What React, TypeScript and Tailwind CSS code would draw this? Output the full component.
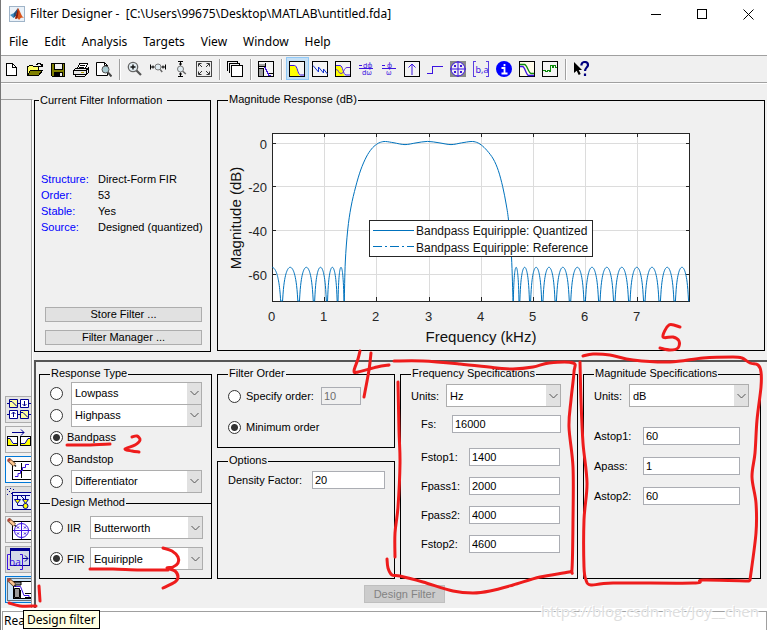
import React from "react";

type Point = [number, number];

const BLUE = "#0072bd";
const RED = "#ee1c1c";

/** Smooth curve through all points (Catmull-Rom converted to cubic Béziers). */
function smooth(points: Point[]): string {
  let d = `M${points[0][0]} ${points[0][1]}`;
  for (let i = 0; i < points.length - 1; i++) {
    const a = points[Math.max(0, i - 1)];
    const b = points[i];
    const c = points[i + 1];
    const e = points[Math.min(points.length - 1, i + 2)];
    d += `C${b[0] + (c[0] - a[0]) / 6} ${b[1] + (c[1] - a[1]) / 6} ${c[0] - (e[0] - b[0]) / 6} ${c[1] - (e[1] - b[1]) / 6} ${c[0]} ${c[1]}`;
  }
  return d;
}

/* ---------- toolbar icons ---------- */

function Icon({ children, soft = false }: { children: React.ReactNode; soft?: boolean }) {
  return (
    <svg
      width="16"
      height="16"
      viewBox="0 0 16 16"
      fill="none"
      stroke="#000"
      shapeRendering={soft ? "auto" : "crispEdges"}
      aria-hidden="true"
      className="block"
    >
      {children}
    </svg>
  );
}

const Frame = () => <rect x="0.5" y="0.5" width="15" height="15" fill="#f4f4f4" />;

const icons: Record<string, React.ReactNode> = {
  New: (
    <Icon>
      <path d="M2.500 2.500h6l4 4v8h-10z" fill="#fff" />
      <path d="M8.500 2.500v4h4" />
    </Icon>
  ),
  Open: (
    <Icon>
      <path d="M0.500 13.500v-8h1l1-1h3l1 1h5v3" fill="#ffff66" />
      <path d="M0.500 14.500l3-5h12l-4 5z" fill="#808000" />
      <path d="M9 3.500h1v-1h3v1h1v2m0 0h-2m2 0h1v-3" />
    </Icon>
  ),
  Save: (
    <Icon>
      <path d="M1.500 2.500h13v13h-12l-1-1z" fill="#808000" />
      <rect x="4.500" y="2.500" width="8" height="6" fill="#f0f0f0" />
      <rect x="4" y="11" width="9" height="4" fill="#000" stroke="none" />
      <rect x="10" y="12" width="2" height="3" fill="#eee" stroke="none" />
    </Icon>
  ),
  Print: (
    <Icon>
      <path d="M4.500 7.500l2-5h8l-2 5z" fill="#fff" />
      <path d="M7 4.500h5M6 6.500h5" />
      <path d="M0.500 9.500l2-2h12l1-1v5l-2 2h-13z" fill="#e8e8e8" />
      <path d="M1 9.500h12v4M13 9.500l2-2M2.500 13.500v2h9l2-2" />
      <path d="M8 11.500h3" stroke="#b5a000" />
    </Icon>
  ),
  "Print preview": (
    <Icon soft>
      <path d="M0.500 1.500h8l3 3v10h-11z" fill="#fff" />
      <path d="M8.500 1.500v3h3" />
      <circle cx="9.500" cy="8.500" r="3.500" fill="#a9cbd2" stroke="#555" />
      <path d="M12 11.500l3.500 4" strokeWidth="2" stroke="#444" />
    </Icon>
  ),
  "Zoom in": (
    <Icon soft>
      <circle cx="6" cy="6" r="4.700" fill="#e3edf2" stroke="#666" strokeWidth="1.300" />
      <path d="M3.500 6h5M6 3.500v5" stroke="#111" strokeWidth="1.400" />
      <path d="M9.500 9.500l4.500 4.500" stroke="#555" strokeWidth="2.200" />
    </Icon>
  ),
  "Zoom X": (
    <Icon soft>
      <circle cx="8" cy="6" r="3" fill="#dfeaf0" stroke="#777" />
      <path d="M10.200 8.500l2 2.500" stroke="#666" strokeWidth="1.500" />
      <path d="M.5 3.500v5M15.500 3.500v5M1 6h3.500M11.500 6H15M3 4.500v3M13 4.500v3" />
    </Icon>
  ),
  "Zoom Y": (
    <Icon soft>
      <circle cx="7.500" cy="8" r="3" fill="#dfeaf0" stroke="#777" />
      <path d="M9.800 10.200l3 2.800" stroke="#666" strokeWidth="1.500" />
      <path d="M5 .5h5M5 15.500h5M7.500 1v3.500M7.500 11.500V15M6 3h3M6 13h3" />
    </Icon>
  ),
  "Full view": (
    <Icon soft>
      <rect x="0.500" y="0.500" width="15" height="15" fill="#eee" stroke="#444" />
      <path
        d="M2.500 5.500v-3h3M3 3l3 3M10.500 2.500h3v3M13 3l-3 3M2.500 10.500v3h3M3 13l3-3M13.500 10.500v3h-3M13 13l-3-3"
        stroke="#333"
      />
    </Icon>
  ),
  "Full analysis": (
    <Icon>
      <path d="M0.500 10V.5h10v2" />
      <path d="M2.500 12V2.500h10v2" />
      <rect x="4.500" y="4.500" width="11" height="11" fill="#fff" />
    </Icon>
  ),
  "Filter specifications": (
    <Icon>
      <Frame />
      <path d="M1 3h6v2H1zM1 8h4v7H1z" fill="#a0a0a0" stroke="none" />
      <path d="M1 5.500h6.500V2M1 7.500h4.500V15M10.500 15v-2.500H15" />
      <path d="M6 6.500h1.500v2h1v2h1v2h1v2h2" stroke="#4214d6" />
    </Icon>
  ),
  "Magnitude response": (
    <Icon soft>
      <Frame />
      <path d="M1 5h5c2 0 3 9 5 10H1z" fill="#ffff00" stroke="none" />
      <path d="M1 4.500h4.500c3 0 3 9 6 9.500H15" stroke="#3c14e0" />
    </Icon>
  ),
  "Phase response": (
    <Icon soft>
      <Frame />
      <path d="M1 4.500l5.500 6.500V6l5 6V8l4 5" stroke="#1030d0" />
    </Icon>
  ),
  "Magnitude and phase responses": (
    <Icon soft>
      <Frame />
      <path d="M1 5h4c2 0 3 9 5 10H1z" fill="#ffff00" stroke="none" />
      <path d="M1 4.500h4c3 0 3 9.500 6 9.500h4" stroke="#3c14e0" />
      <path d="M15 6.500h-3c-3 0-3 6-6 6-3 0-2-4-5-4" stroke="#6630d0" />
    </Icon>
  ),
  "Group delay response": (
    <Icon>
      <text x="5" y="6.500" fontSize="7" fill="#3c14e0" stroke="none" className="font-sans">dϕ</text>
      <text x="4" y="14.300" fontSize="7" fill="#3c14e0" stroke="none" className="font-sans">dω</text>
      <path d="M1 4.500h3M1 7.500h14" stroke="#3c14e0" />
    </Icon>
  ),
  "Phase delay": (
    <Icon>
      <text x="6" y="6.500" fontSize="7" fill="#3c14e0" stroke="none" className="font-sans">ϕ</text>
      <text x="5" y="14.300" fontSize="7" fill="#3c14e0" stroke="none" className="font-sans">ω</text>
      <path d="M1 4.500h3M1 7.500h14" stroke="#3c14e0" />
    </Icon>
  ),
  "Impulse response": (
    <Icon soft>
      <Frame />
      <path d="M8 14V3M4.500 6.500L8 3l3.500 3.500" stroke="#3c14e0" />
    </Icon>
  ),
  "Step response": (
    <Icon>
      <path d="M0 12.500h5.500v-7H16" stroke="#3c14e0" />
    </Icon>
  ),
  "Pole/zero plot": (
    <Icon soft>
      <rect x="0" y="0" width="16" height="16" fill="#888" stroke="none" />
      <circle cx="8" cy="8" r="7" fill="#eee" stroke="#3c14e0" />
      <path d="M8 0v16M0 8h16" stroke="#3c14e0" />
      <path d="M4 4l2 2m0-2L4 6M10 4l2 2m0-2l-2 2M4 10l2 2m0-2l-2 2M10 10l2 2m0-2l-2 2" stroke="#3c14e0" />
    </Icon>
  ),
  "Filter coefficients": (
    <Icon>
      <path d="M3 .5H.5v15H3M13 .5h2.500v15H13" stroke="#5a3ee0" />
      <text x="2.500" y="12" fontSize="9" fill="#3c14e0" stroke="none" className="font-sans">b,a</text>
    </Icon>
  ),
  "Filter information": (
    <Icon soft>
      <circle cx="8" cy="8" r="8" fill="#0000ff" stroke="none" />
      <path d="M8.500 3v2.200M5.500 7h3v5.500M5.500 12.500h6" stroke="#fff" strokeWidth="1.800" />
    </Icon>
  ),
  "Magnitude response estimate": (
    <Icon soft>
      <rect x="0.500" y="0.500" width="15" height="15" fill="#fffbea" />
      <path d="M1 3.500h4.500c2.500 0 4 8.500 6.500 9h3" stroke="#0a8a0a" strokeWidth="1.300" />
      <path d="M1 5.500h2.500c2.500 0 3.500 8.500 6 9H15" stroke="#3c14e0" strokeWidth="1.300" />
    </Icon>
  ),
  "Round-off noise power spectrum": (
    <Icon>
      <Frame />
      <path d="M1 9.500h2v1h2v-1h2v1h1.500v-6h2v2h1v-2h2v2h1" stroke="#0a8a0a" />
    </Icon>
  ),
  "What's this": (
    <Icon soft>
      <path d="M1 1v11l2.700-2.300 2 4.300 2-1-2-4H9z" fill="#000" stroke="none" />
      <path d="M8.500 4.500V3.200C9 1.500 10.500 1 12 1s3 1 3 3-3 3-3 6M12 12.500v2.500" stroke="#00007f" strokeWidth="2.200" />
    </Icon>
  ),
};

const toolbar: string[][] = [
  ["New", "Open", "Save", "Print", "Print preview"],
  ["Zoom in", "Zoom X", "Zoom Y", "Full view"],
  ["Full analysis"],
  ["Filter specifications"],
  [
    "Magnitude response",
    "Phase response",
    "Magnitude and phase responses",
    "Group delay response",
    "Phase delay",
    "Impulse response",
    "Step response",
    "Pole/zero plot",
    "Filter coefficients",
    "Filter information",
    "Magnitude response estimate",
    "Round-off noise power spectrum",
  ],
  ["What's this"],
];

function Toolbar() {
  return (
    <div role="toolbar" className="flex h-7 items-start border-b border-white bg-[#f0f0f0] shadow-[inset_0_-1px_0_#a0a0a0]">
      {toolbar.map((group, g) => (
        <div key={g} className="flex">
          {g > 0 && (
            <span className="flex w-2 pl-[3px] pt-[3px]">
              <span className="h-[21px] w-[2px] border-l border-r border-l-[#a0a0a0] border-r-white" />
            </span>
          )}
          {group.map((name) => (
            <button
              key={name}
              type="button"
              aria-label={name}
              className={
                name === "Magnitude response"
                  ? "mt-px h-[23px] w-[23px] border border-[#90c8f6] bg-[#c4dff5] pl-[2px]"
                  : "mt-px h-[23px] w-[23px] pl-[3px]"
              }
            >
              {icons[name]}
            </button>
          ))}
        </div>
      ))}
    </div>
  );
}

/* ---------- side panel icons ---------- */

const Pencil = () => (
  <g>
    <path d="M1.500 1.500l6 5.500" stroke="#5b3a1c" strokeWidth="4" />
    <path d="M2 2l5.500 5" stroke="#fbc793" strokeWidth="2.400" />
    <path d="M1 1l2 2" stroke="#b5483c" strokeWidth="3" />
    <path d="M7.500 7l1.500 1.500" stroke="#222" strokeWidth="1.500" />
  </g>
);

const NAVY = "#000090";

const sideItems: { name: string; look: string; art: React.ReactNode }[] = [
  {
    name: "Create a multirate filter",
    look: "border-[#adadad] bg-[#e6e6e6]",
    art: (
      <g stroke={NAVY}>
        <path d="M0 5.500h24M0 16.500h24" />
        <path d="M2.500 1.500h8v8h-8zM13.500 12.500h8v8h-8z" fill="#ffffa0" />
        <path d="M13.500 1.500h8v8h-8zM2.500 12.500h8v8h-8z" fill="#fff" />
        <path d="M3 3.500h2l5 5M14 14.500h2l5 5M17.500 3v5M15.500 6l2 2 2-2M6.500 19v-5M4.500 16l2-2 2 2" />
      </g>
    ),
  },
  {
    name: "Transform filter",
    look: "border-[#adadad] bg-[#f0f0f0]",
    art: (
      <g stroke={NAVY}>
        <path d="M5 4.500h12M14 1.500l3 3-3 3" />
        <g stroke="#000">
          <rect x="0.500" y="8.500" width="10" height="9" fill="#fff" />
          <rect x="13.500" y="8.500" width="10" height="9" fill="#fff" />
        </g>
        <path d="M1 11h2l2 5h5v1H1zM14 16h4l3-5h2v6h-9z" fill="#ffff00" stroke="none" />
        <path d="M1 10.500h2l3 5h4M14 15.500h4l3-5h2" />
      </g>
    ),
  },
  {
    name: "Set quantization parameters",
    look: "border-[#0078d7] bg-[#fafafa]",
    art: (
      <g>
        <rect x="5.500" y="3.500" width="20" height="18" fill="#fff" stroke="#000" />
        <path d="M14.500 5v15M7 12.500h17" stroke="#000" />
        <path d="M8 18.500h3v-3h2.500v-3h2v-3h3v-3H22" stroke="#3c14e0" />
        <Pencil />
      </g>
    ),
  },
  {
    name: "Realize model",
    look: "border-[#adadad] bg-[#dedede]",
    art: (
      <g stroke={NAVY}>
        <path d="M0 1.500h1M3 .5h1M2 3.500h1M4 5.500h1M0 6.500h1M6 1.500h1" />
        <rect x="5.500" y="4.500" width="20" height="17" fill="#eaf0ff" />
        <path d="M6 7.500h17M10.500 7v10M18.500 7v9M10.500 17.500h6M14 8l3 3" />
        <path d="M7.500 11.500h6l-3 4zM15.500 11.500h6l-3 4z" fill="#ffff00" />
        <circle cx="18.500" cy="18" r="2.500" fill="#ffff00" />
      </g>
    ),
  },
  {
    name: "Pole/zero editor",
    look: "border-[#adadad] bg-[#f0f0f0]",
    art: (
      <g>
        <rect x="5.500" y="3.500" width="20" height="18" fill="#fff" stroke="#000" />
        <circle cx="14.500" cy="12.500" r="7" stroke="#3c14e0" fill="#fff" />
        <path
          d="M14.500 4v17M6 12.500h18M10 8.500l2 2m0-2l-2 2M17 8.500l2 2m0-2l-2 2M10 14.500l2 2m0-2l-2 2M17 14.500l2 2m0-2l-2 2"
          stroke="#3c14e0"
        />
        <Pencil />
      </g>
    ),
  },
  {
    name: "Import filter",
    look: "border-[#adadad] bg-[#dedede]",
    art: (
      <g>
        <rect x="3.500" y="0.500" width="19" height="17" fill="#d4dae8" stroke={NAVY} />
        <rect x="3" y="0" width="20" height="3" fill={NAVY} />
        <path d="M15 10.500h6M18 7.500l3 3-3 3" stroke={NAVY} />
        <path d="M3 6.500H.5v15H3M13 6.500h2.500v15H13" stroke="#3c14e0" />
        <text x="2" y="18" fontSize="10" fill="#3c14e0" className="font-sans">
          ba
        </text>
      </g>
    ),
  },
  {
    name: "Design filter",
    look: "border-[#0078d7] bg-[#cce4f7]",
    art: (
      <g>
        <rect x="0.500" y="0.500" width="26" height="22" stroke="#000" strokeDasharray="1 1" />
        <rect x="6.500" y="3.500" width="20" height="17" fill="#fff" stroke="#000" />
        <path d="M7 4h7v3H7zM7.500 10.500h5v9h-5z" fill="#999" stroke="#000" />
        <path d="M7 8.500h6.500l3.500 9h5v2" stroke="#3c14e0" />
        <path d="M13.500 12v8M18 15.500h6M18 19.500h6" stroke="#000" />
        <Pencil />
      </g>
    ),
  },
];

function SideBar() {
  return (
    <nav
      aria-label="Panels"
      className="mr-px mt-[15px] flex w-8 shrink-0 flex-col justify-end gap-[3px] border-r border-t border-r-white border-t-[#a0a0a0] pb-[5px] pl-1 shadow-[inset_-1px_0_0_#a0a0a0]"
    >
      {sideItems.map((item) => (
        <button
          key={item.name}
          type="button"
          aria-label={item.name}
          className={`h-[27px] w-[26px] overflow-hidden border border-r-0 pl-px ${item.look}`}
        >
          <svg width="24" height="23" viewBox="0 0 24 23" fill="none" aria-hidden="true" className="block">
            {item.art}
          </svg>
        </button>
      ))}
    </nav>
  );
}

/* ---------- magnitude chart ---------- */

const leftNulls = [281.7, 298.7, 314, 327, 337.7, 344.3];
const rightNulls = [513, 519.3, 530, 542.3, 555.7, 570, 584.7, 599.3, 614.3, 629.3, 644.3, 659.7, 674.7, 689.3];
const band: Point[] = [
  [344.3, 301], [345.3, 262], [347.7, 230], [351, 207], [355.7, 186.7], [360.7, 170], [366.3, 157],
  [371.5, 149], [376.3, 144.5], [380.5, 142.3], [385.5, 141.5], [394, 142.8], [405, 144.6],
  [416, 142.9], [427.5, 141.4], [439, 142.8], [451, 144.6], [461.5, 142.9], [471, 141.5],
  [476.5, 142.3], [481.3, 145], [487, 150.5], [493.3, 159], [498.3, 170.5], [502.7, 186.7],
  [506.3, 205], [508.7, 222], [511.5, 257], [513, 301],
];

function lobe(from: number, to: number, start = 0): string {
  const steps = 40;
  let d = "";
  for (let i = 0; i <= steps; i++) {
    const t = start + ((1 - start) * i) / steps;
    const s = Math.max(Math.sin(Math.PI * t), 0.001);
    const y = Math.min(301, 267.3 - 43.6 * Math.log10(s));
    d += `${i === 0 ? "M" : "L"}${(from + (to - from) * t).toFixed(2)} ${y.toFixed(2)}`;
  }
  return d;
}

const lobes = [
  lobe(262.3, leftNulls[0], 0.5),
  ...leftNulls.slice(1).map((x, i) => lobe(leftNulls[i], x)),
  ...rightNulls.slice(1).map((x, i) => lobe(rightNulls[i], x)),
].join("");

const xTicks = [0, 1, 2, 3, 4, 5, 6, 7].map((n) => ({ n, x: Math.round(272 + n * 52.2) + 0.5 }));
const yTicks = [
  { n: 0, y: 143.5 },
  { n: -20, y: 186.5 },
  { n: -40, y: 230.5 },
  { n: -60, y: 274.5 },
];

function Chart() {
  return (
    <svg viewBox="218 108 546 242" className="block h-[242px] w-full" role="img" aria-label="Magnitude response">
      <rect x="272.500" y="133.500" width="417" height="168" fill="#fff" />
      <g stroke="#dcdcdc">
        {xTicks.slice(1).map((t) => (
          <path key={t.n} d={`M${t.x} 134V301`} />
        ))}
        {yTicks.map((t) => (
          <path key={t.n} d={`M273 ${t.y}H689`} />
        ))}
      </g>
      <g stroke="#262626" fill="none">
        {xTicks.map((t) => (
          <path key={t.n} d={`M${t.x} 133v4M${t.x} 301v-4`} />
        ))}
        {yTicks.map((t) => (
          <path key={t.n} d={`M272 ${t.y}h4M690 ${t.y}h-4`} />
        ))}
        <rect x="272.500" y="133.500" width="417" height="168" />
      </g>
      <path d={lobes + smooth(band)} fill="none" stroke={BLUE} strokeWidth="1" />
      <g fill="#262626" fontSize="13">
        {xTicks.map((t) => (
          <text key={t.n} x={t.x - 1} y="321" textAnchor="middle">
            {t.n}
          </text>
        ))}
        {yTicks.map((t) => (
          <text key={t.n} x="267" y={t.y + 5} textAnchor="end">
            {t.n}
          </text>
        ))}
      </g>
      <g fill="#111" fontSize="15">
        <text x="481" y="342" textAnchor="middle">
          Frequency (kHz)
        </text>
        <text transform="translate(241 218) rotate(-90)" textAnchor="middle">
          Magnitude (dB)
        </text>
      </g>
      <rect x="369.500" y="220.500" width="223" height="36" fill="#fff" stroke="#262626" />
      <path d="M373 230.500h41" stroke={BLUE} />
      <path d="M373 246.500h41" stroke={BLUE} strokeDasharray="9 3 2 3" />
      <g fill="#111" fontSize="12">
        <text x="416" y="235">Bandpass Equiripple: Quantized</text>
        <text x="416" y="252">Bandpass Equiripple: Reference</text>
      </g>
    </svg>
  );
}

/* ---------- form pieces ---------- */

function Group({ title, className = "", children }: { title: string; className?: string; children: React.ReactNode }) {
  return (
    <fieldset className={`min-w-0 border border-black ${className}`}>
      <legend className="ml-[10px] px-px pb-[3px] leading-3">{title}</legend>
      {children}
    </fieldset>
  );
}

function Select({ label, value, className = "" }: { label: string; value: string; className?: string }) {
  return (
    <span className={`relative block h-[23px] min-w-0 ${className}`}>
      <select
        aria-label={label}
        defaultValue={value}
        className="block h-full w-full appearance-none border border-[#adadad] bg-white pl-[3px] pr-5"
      >
        <option>{value}</option>
      </select>
      <span className="pointer-events-none absolute bottom-px right-px top-px flex w-[14px] items-center justify-center bg-[#e1e1e1]">
        <svg width="9" height="6" viewBox="0 0 9 6" fill="none" stroke="#555" aria-hidden="true">
          <path d="M0.500 1l4 4 4-4" />
        </svg>
      </span>
    </span>
  );
}

function Radio({ name, label, checked = false }: { name: string; label: string; checked?: boolean }) {
  return (
    <input
      type="radio"
      name={name}
      aria-label={label}
      defaultChecked={checked}
      className="h-[13px] w-[13px] shrink-0 appearance-none rounded-full border border-[#333] bg-white checked:bg-[radial-gradient(circle,#333_3px,#fff_4px)]"
    />
  );
}

function Field({
  label,
  value,
  labelWidth,
  className = "",
}: {
  label: string;
  value: string;
  labelWidth: string;
  className?: string;
}) {
  return (
    <label className={`flex h-[18px] items-center ${className}`}>
      <span className={`shrink-0 ${labelWidth}`}>{label}</span>
      <input defaultValue={value} className="h-full w-0 min-w-0 flex-1 border border-[#abadb3] bg-white pl-[2px]" />
    </label>
  );
}

function UnitsRow({ value, className }: { value: string; className: string }) {
  return (
    <label className={`flex items-center pl-[10px] ${className}`}>
      <span className="w-[35px] shrink-0">Units:</span>
      <Select label="Units" value={value} className="flex-1" />
    </label>
  );
}

/* ---------- hand-drawn marks ---------- */

const marks: Point[][] = [
  [[398, 382], [399, 430], [400, 463], [398, 507], [395, 533], [395, 557]],
  [[394, 361], [423, 361], [460, 364], [497, 368], [513, 369], [533, 367], [549, 363], [573, 363], [574, 372], [571, 400], [569, 427], [573, 467], [573, 520], [572, 569], [569, 572], [540, 577], [513, 585], [490, 591], [473, 593], [453, 591], [423, 582], [400, 576], [392, 575], [388, 568], [387, 559]],
  [[583, 356], [593, 354], [610, 355], [633, 360], [670, 362], [703, 358], [733, 357], [742, 358], [750, 363], [758, 365], [761, 372], [761, 387], [757, 420], [755, 453], [752, 477], [756, 503], [756, 533], [750, 580]],
  [[580, 362], [581, 400], [583, 443], [587, 483], [584, 520], [584, 567], [586, 580], [591, 585], [613, 583], [693, 583], [703, 580], [749, 581]],
  [[680, 327], [669, 325], [663, 337], [673, 337], [679, 341], [678, 348], [670, 350], [660, 348]],
  [[360, 351], [358, 359], [354, 371], [358, 372], [377, 367], [389, 365]],
  [[371, 353], [369, 370], [364, 397]],
  [[132, 437], [137, 436], [140, 440], [135, 445], [125, 449], [132, 451], [139, 452]],
  [[67, 445], [87, 445], [110, 444]],
  [[163, 548], [172, 551], [178, 557], [178, 563], [173, 567], [167, 568], [175, 571], [178, 577], [175, 582], [163, 588]],
  [[90, 569], [113, 569], [140, 570], [168, 570]],
  [[39, 586], [40, 601]],
  [[9, 603], [20, 606], [36, 606]],
];

function Marks() {
  return (
    <svg
      width="767"
      height="630"
      viewBox="0 0 767 630"
      fill="none"
      stroke={RED}
      strokeWidth="3"
      strokeLinecap="round"
      strokeLinejoin="round"
      aria-hidden="true"
      className="pointer-events-none absolute -left-px top-0"
    >
      {marks.map((m, i) => (
        <path key={i} d={smooth(m)} />
      ))}
    </svg>
  );
}

/* ---------- window ---------- */

const info = [
  ["Structure:", "Direct-Form FIR"],
  ["Order:", "53"],
  ["Stable:", "Yes"],
  ["Source:", "Designed (quantized)"],
];

const uiFont = "font-['Noto_Sans','Open_Sans',sans-serif]";

export default function App() {
  return (
    <div className="relative flex min-h-screen flex-col overflow-hidden border-l border-[#777] bg-white font-['Liberation_Sans',Arial,sans-serif] text-[11px] leading-4 text-black">
      <header className={`flex h-7 items-center pl-2 text-[12px] ${uiFont}`}>
        <svg width="16" height="16" viewBox="0 0 16 16" aria-hidden="true">
          <rect x="0.500" y="0.500" width="15" height="15" fill="#eaf1f8" stroke="#9fb4c8" />
          <path d="M1 9l4-2 2 2-2.500 3z" fill="#3f8fc4" />
          <path d="M5 7l4-5-1.500 7.500-3 2.500z" fill="#22507c" />
          <path d="M9 2c2 2 3 8 6 10-2-1-3-1-5 2-1-2-2-2-4-1 1-3 2-7 3-11z" fill="#d9541a" />
          <path d="M9 2c1 4 0 8-1 11 0 0-1-1-2 0 1-3 2-7 3-11z" fill="#8a1d0c" />
        </svg>
        <h1 className="ml-[5px] flex-1 whitespace-pre">{"Filter Designer -  [C:\\Users\\99675\\Desktop\\MATLAB\\untitled.fda]"}</h1>
        <div className="-mr-1 flex">
          <button type="button" aria-label="Minimize" className="flex h-7 w-[46px] items-center justify-center">
            <svg width="11" height="11" stroke="#000" aria-hidden="true"><path d="M0 5.500h10" /></svg>
          </button>
          <button type="button" aria-label="Maximize" className="flex h-7 w-[46px] items-center justify-center">
            <svg width="11" height="11" stroke="#000" fill="none" aria-hidden="true"><rect x="0.500" y="0.500" width="9" height="9" /></svg>
          </button>
          <button type="button" aria-label="Close" className="flex h-7 w-[46px] items-center justify-center">
            <svg width="11" height="11" stroke="#000" aria-hidden="true"><path d="M0.500 0.500l10 10M10.500 0.500l-10 10" /></svg>
          </button>
        </div>
      </header>

      <nav aria-label="Menu" className={`flex h-7 items-center gap-4 border-b border-[#a0a0a0] pl-2 text-[12px] ${uiFont}`}>
        {["File", "Edit", "Analysis", "Targets", "View", "Window", "Help"].map((item) => (
          <button key={item} type="button">
            {item}
          </button>
        ))}
      </nav>

      <Toolbar />

      <div className="flex bg-[#f0f0f0]">
        <SideBar />
        <main className="min-w-0 flex-1">
          <div className="flex gap-[6px] pb-2 pr-[2px] pt-[9px]">
            <fieldset className="mt-px w-[177px] shrink-0 border border-black pb-[6px]">
              <legend className="ml-1 pl-px pr-[5px] leading-[13px]">Current Filter Information</legend>
              <dl className="mt-16 grid grid-cols-[57px_1fr] whitespace-nowrap pl-[6px]">
                {info.map(([term, value]) => (
                  <React.Fragment key={term}>
                    <dt className="text-[#0000ff]">{term}</dt>
                    <dd>{value}</dd>
                  </React.Fragment>
                ))}
              </dl>
              <div className="mt-[72px] flex flex-col gap-2 pl-[10px] pr-2">
                <button type="button" className="h-[15px] border border-[#adadad] bg-[#e1e1e1] leading-[13px]">
                  Store Filter ...
                </button>
                <button type="button" className="h-[15px] border border-[#adadad] bg-[#e1e1e1] leading-[13px]">
                  Filter Manager ...
                </button>
              </div>
            </fieldset>
            <Group title="Magnitude Response (dB)" className="mb-px flex-1">
              <Chart />
            </Group>
          </div>

          <div className="border-l-2 border-t-2 border-[#555] pb-[5px] pt-[5px]">
            <div className="grid grid-cols-[minmax(0,173fr)_minmax(0,178fr)_minmax(0,178fr)_minmax(0,178fr)] gap-[5px] pl-[3px] pr-[6px]">
              <div className="flex flex-col">
                <Group title="Response Type" className="border-b-0 pb-[11px]">
                  {["Lowpass", "Highpass", "Bandpass", "Bandstop", "Differentiator"].map((type) => (
                    <label key={type} className="flex h-[22px] items-center pl-[10px] pr-[9px]">
                      <Radio name="response" label={type} checked={type === "Bandpass"} />
                      {type.startsWith("Band") ? (
                        <span className="ml-1">{type}</span>
                      ) : (
                        <Select label={`${type} type`} value={type} className="ml-2 flex-1" />
                      )}
                    </label>
                  ))}
                </Group>
                <Group title="Design Method" className="-mt-[7px] pb-[8px]">
                  <div className="flex flex-col gap-2 pl-[10px] pr-2 pt-[5px]">
                    <label className="flex items-center">
                      <Radio name="method" label="IIR" />
                      <span className="ml-1 w-[23px]">IIR</span>
                      <Select label="IIR method" value="Butterworth" className="flex-1" />
                    </label>
                    <label className="flex items-center">
                      <Radio name="method" label="FIR" checked />
                      <span className="ml-1 w-[23px]">FIR</span>
                      <Select label="FIR method" value="Equiripple" className="flex-1" />
                    </label>
                  </div>
                </Group>
              </div>

              <div className="flex flex-col gap-[6px]">
                <Group title="Filter Order" className="pb-[11px]">
                  <div className="flex flex-col gap-[13px] pl-[10px] pt-[5px]">
                    <div className="flex h-[18px] items-center">
                      <Radio name="order" label="Specify order" />
                      <span className="ml-[5px] w-[75px]">Specify order:</span>
                      <input
                        aria-label="Order"
                        disabled
                        defaultValue="10"
                        className="h-full w-10 border border-[#abadb3] bg-[#f0f0f0] pl-[2px] text-[#6d6d6d]"
                      />
                    </div>
                    <label className="flex h-[18px] items-center">
                      <Radio name="order" label="Minimum order" checked />
                      <span className="ml-[5px]">Minimum order</span>
                    </label>
                  </div>
                </Group>
                <Group title="Options" className="flex-1">
                  <Field label="Density Factor:" value="20" labelWidth="w-[84px]" className="mt-[2px] pl-[10px] pr-[9px]" />
                </Group>
              </div>

              <Group title="Frequency Specifications">
                <UnitsRow value="Hz" className="pr-4 pt-[2px]" />
                <Field label="Fs:" value="16000" labelWidth="w-[31px]" className="mt-2 pl-5 pr-4" />
                <div className="mt-[15px] flex flex-col gap-[11px]">
                  <Field label="Fstop1:" value="1400" labelWidth="w-12" className="pl-5 pr-[17px]" />
                  <Field label="Fpass1:" value="2000" labelWidth="w-12" className="pl-5 pr-[17px]" />
                  <Field label="Fpass2:" value="4000" labelWidth="w-12" className="pl-5 pr-[17px]" />
                  <Field label="Fstop2:" value="4600" labelWidth="w-12" className="pl-5 pr-[17px]" />
                </div>
              </Group>

              <Group title="Magnitude Specifications">
                <UnitsRow value="dB" className="pr-[11px] pt-[2px]" />
                <div className="mt-5 flex flex-col gap-3">
                  <Field label="Astop1:" value="60" labelWidth="w-[49px]" className="pl-[10px] pr-5" />
                  <Field label="Apass:" value="1" labelWidth="w-[49px]" className="pl-[10px] pr-5" />
                  <Field label="Astop2:" value="60" labelWidth="w-[49px]" className="pl-[10px] pr-5" />
                </div>
              </Group>
            </div>
            <div className="mt-[6px] flex justify-center pl-[6px]">
              <button type="button" disabled className="h-[18px] w-[81px] border border-[#bfbfbf] bg-[#ccc] text-[#838383]">
                Design Filter
              </button>
            </div>
          </div>
        </main>
      </div>

      <footer className={`relative flex flex-1 flex-col pl-px pt-[3px] text-[12px] ${uiFont}`}>
        <div className="flex flex-1 items-center border border-b-0 border-[#a0a0a0] pl-px">Ready</div>
        <div role="tooltip" className="absolute left-[22px] top-[2px] h-[19px] whitespace-nowrap border border-black bg-[#ffffe1] px-[3px] leading-[17px]">
          Design filter
        </div>
        <span className="absolute -top-[7px] right-[8px] font-['Open_Sans',sans-serif] text-[15px] leading-5 text-[#dedede] [text-shadow:1px_1px_1px_#fff,-1px_-1px_0_#fff]">
          https://blog.csdn.net/Joy__chen
        </span>
      </footer>

      <Marks />
    </div>
  );
}
